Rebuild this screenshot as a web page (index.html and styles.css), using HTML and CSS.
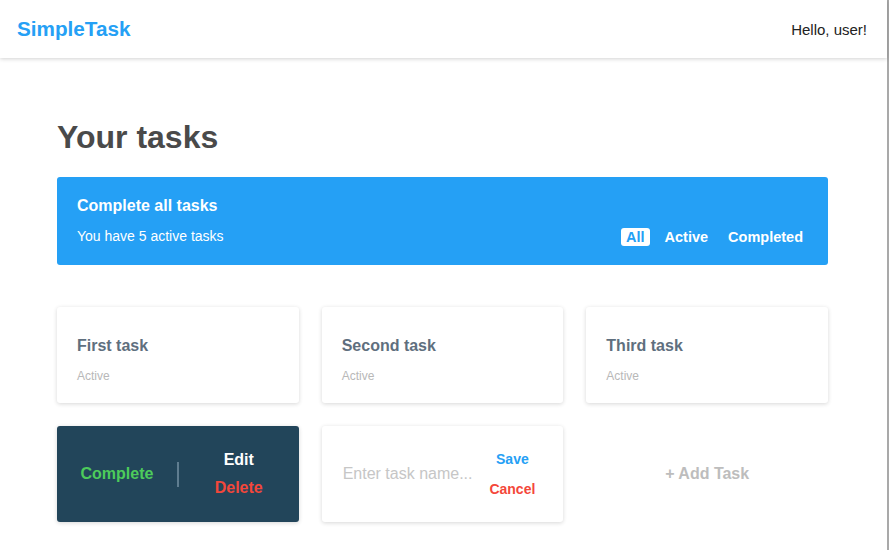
FILE: index.html
```html
<!DOCTYPE html>
<html>
<head>
<meta charset="utf-8">
<link rel="stylesheet" href="styles.css">
</head>
<body>
<div class="app">
  <header class="topbar">
    <div class="brand">SimpleTask</div>
    <div class="greeting">Hello, user!</div>
  </header>
  <main class="main">
    <h1 class="page-title">Your tasks</h1>
    <section class="banner">
      <div class="banner-text">
        <div class="banner-title">Complete all tasks</div>
        <div class="banner-sub">You have 5 active tasks</div>
      </div>
      <nav class="filters">
        <span class="filter is-active">All</span>
        <span class="filter">Active</span>
        <span class="filter">Completed</span>
      </nav>
    </section>
    <section class="grid">
      <div class="card task">
        <div class="task-title">First task</div>
        <div class="task-status">Active</div>
      </div>
      <div class="card task">
        <div class="task-title">Second task</div>
        <div class="task-status">Active</div>
      </div>
      <div class="card task">
        <div class="task-title">Third task</div>
        <div class="task-status">Active</div>
      </div>
      <div class="card actions">
        <div class="action-half"><span class="act act-complete">Complete</span></div>
        <div class="divider"></div>
        <div class="action-half stack">
          <span class="act act-edit">Edit</span>
          <span class="act act-delete">Delete</span>
        </div>
      </div>
      <div class="card editor">
        <input class="task-input" type="text" placeholder="Enter task name...">
        <div class="editor-buttons">
          <span class="btn btn-save">Save</span>
          <span class="btn btn-cancel">Cancel</span>
        </div>
      </div>
      <div class="add-card">+ Add Task</div>
    </section>
  </main>
</div>
</body>
</html>
```
FILE: styles.css
```css
* { box-sizing: border-box; }
html, body { margin: 0; padding: 0; background: #fff; }
body {
  font-family: "Liberation Sans", Arial, Helvetica, sans-serif;
  color: #333;
}
.app {
  min-height: 550px;
  border-right: 2px solid #a9a9a9;
}
.topbar {
  height: 58px;
  display: flex;
  align-items: center;
  justify-content: space-between;
  padding: 0 20px 0 17px;
  background: #fff;
  box-shadow: 0 1px 4px rgba(0,0,0,0.18);
  position: relative;
  z-index: 1;
}
.brand {
  color: #25a0f5;
  font-size: 20.7px;
  font-weight: bold;
}
.greeting {
  font-size: 15px;
  color: #222;
}
.main {
  padding: 61px 59px 0 57px;
}
.page-title {
  margin: 0 0 22px;
  font-size: 32px;
  line-height: 36px;
  font-weight: bold;
  color: #4a4a4a;
}
.banner {
  height: 88px;
  background: #25a0f5;
  border-radius: 3px;
  padding: 19px 20px 0 20px;
  color: #fff;
  display: flex;
  justify-content: space-between;
  align-items: flex-end;
}
.banner-text { padding-bottom: 20px; }
.banner-title {
  font-size: 16px;
  line-height: 20px;
  font-weight: bold;
}
.banner-sub {
  margin-top: 11px;
  font-size: 14px;
  line-height: 18px;
}
.filters {
  display: flex;
  gap: 10px;
  padding-bottom: 19px;
}
.filter {
  font-size: 14.5px;
  font-weight: bold;
  line-height: 18px;
  padding: 0 5px;
  border-radius: 3px;
  color: #fff;
}
.filter.is-active {
  background: #fff;
  color: #25a0f5;
}
.grid {
  margin-top: 42px;
  display: grid;
  grid-template-columns: repeat(3, minmax(0, 1fr));
  grid-auto-rows: 96px;
  gap: 23px;
}
.card {
  background: #fff;
  border-radius: 3px;
  box-shadow: 0 1px 4px rgba(0,0,0,0.16);
}
.task {
  padding: 29px 20px 0 20px;
}
.task-title {
  font-size: 16px;
  line-height: 20px;
  font-weight: bold;
  color: #5f6f7e;
}
.task-status {
  margin-top: 12px;
  font-size: 12px;
  line-height: 16px;
  color: #b8b8b8;
}
.actions {
  background: #22455a;
  display: flex;
  align-items: center;
}
.action-half {
  flex: 1;
  display: flex;
  justify-content: center;
  align-items: center;
}
.stack {
  flex-direction: column;
  gap: 8px;
}
.divider {
  width: 2px;
  height: 25px;
  background: #5f7d90;
  margin-top: 1px;
}
.act {
  font-size: 16px;
  line-height: 20px;
  font-weight: bold;
}
.act-complete { color: #4dcb5b; }
.act-edit { color: #fff; }
.act-delete { color: #f4473a; }
.editor {
  display: flex;
  align-items: center;
  padding: 0 28px 0 21px;
}
.task-input {
  flex: 1;
  min-width: 0;
  border: none;
  outline: none;
  background: transparent;
  font-family: inherit;
  font-size: 16px;
  color: #555;
  padding: 0;
}
.task-input::placeholder { color: #c6c6c6; }
.editor-buttons {
  display: flex;
  flex-direction: column;
  align-items: center;
  gap: 12px;
}
.btn {
  font-size: 14px;
  line-height: 18px;
  font-weight: bold;
}
.btn-save { color: #25a0f5; }
.btn-cancel { color: #f4473a; }
.add-card {
  display: flex;
  align-items: center;
  justify-content: center;
  font-size: 16px;
  font-weight: bold;
  color: #bdbdbd;
}
```
